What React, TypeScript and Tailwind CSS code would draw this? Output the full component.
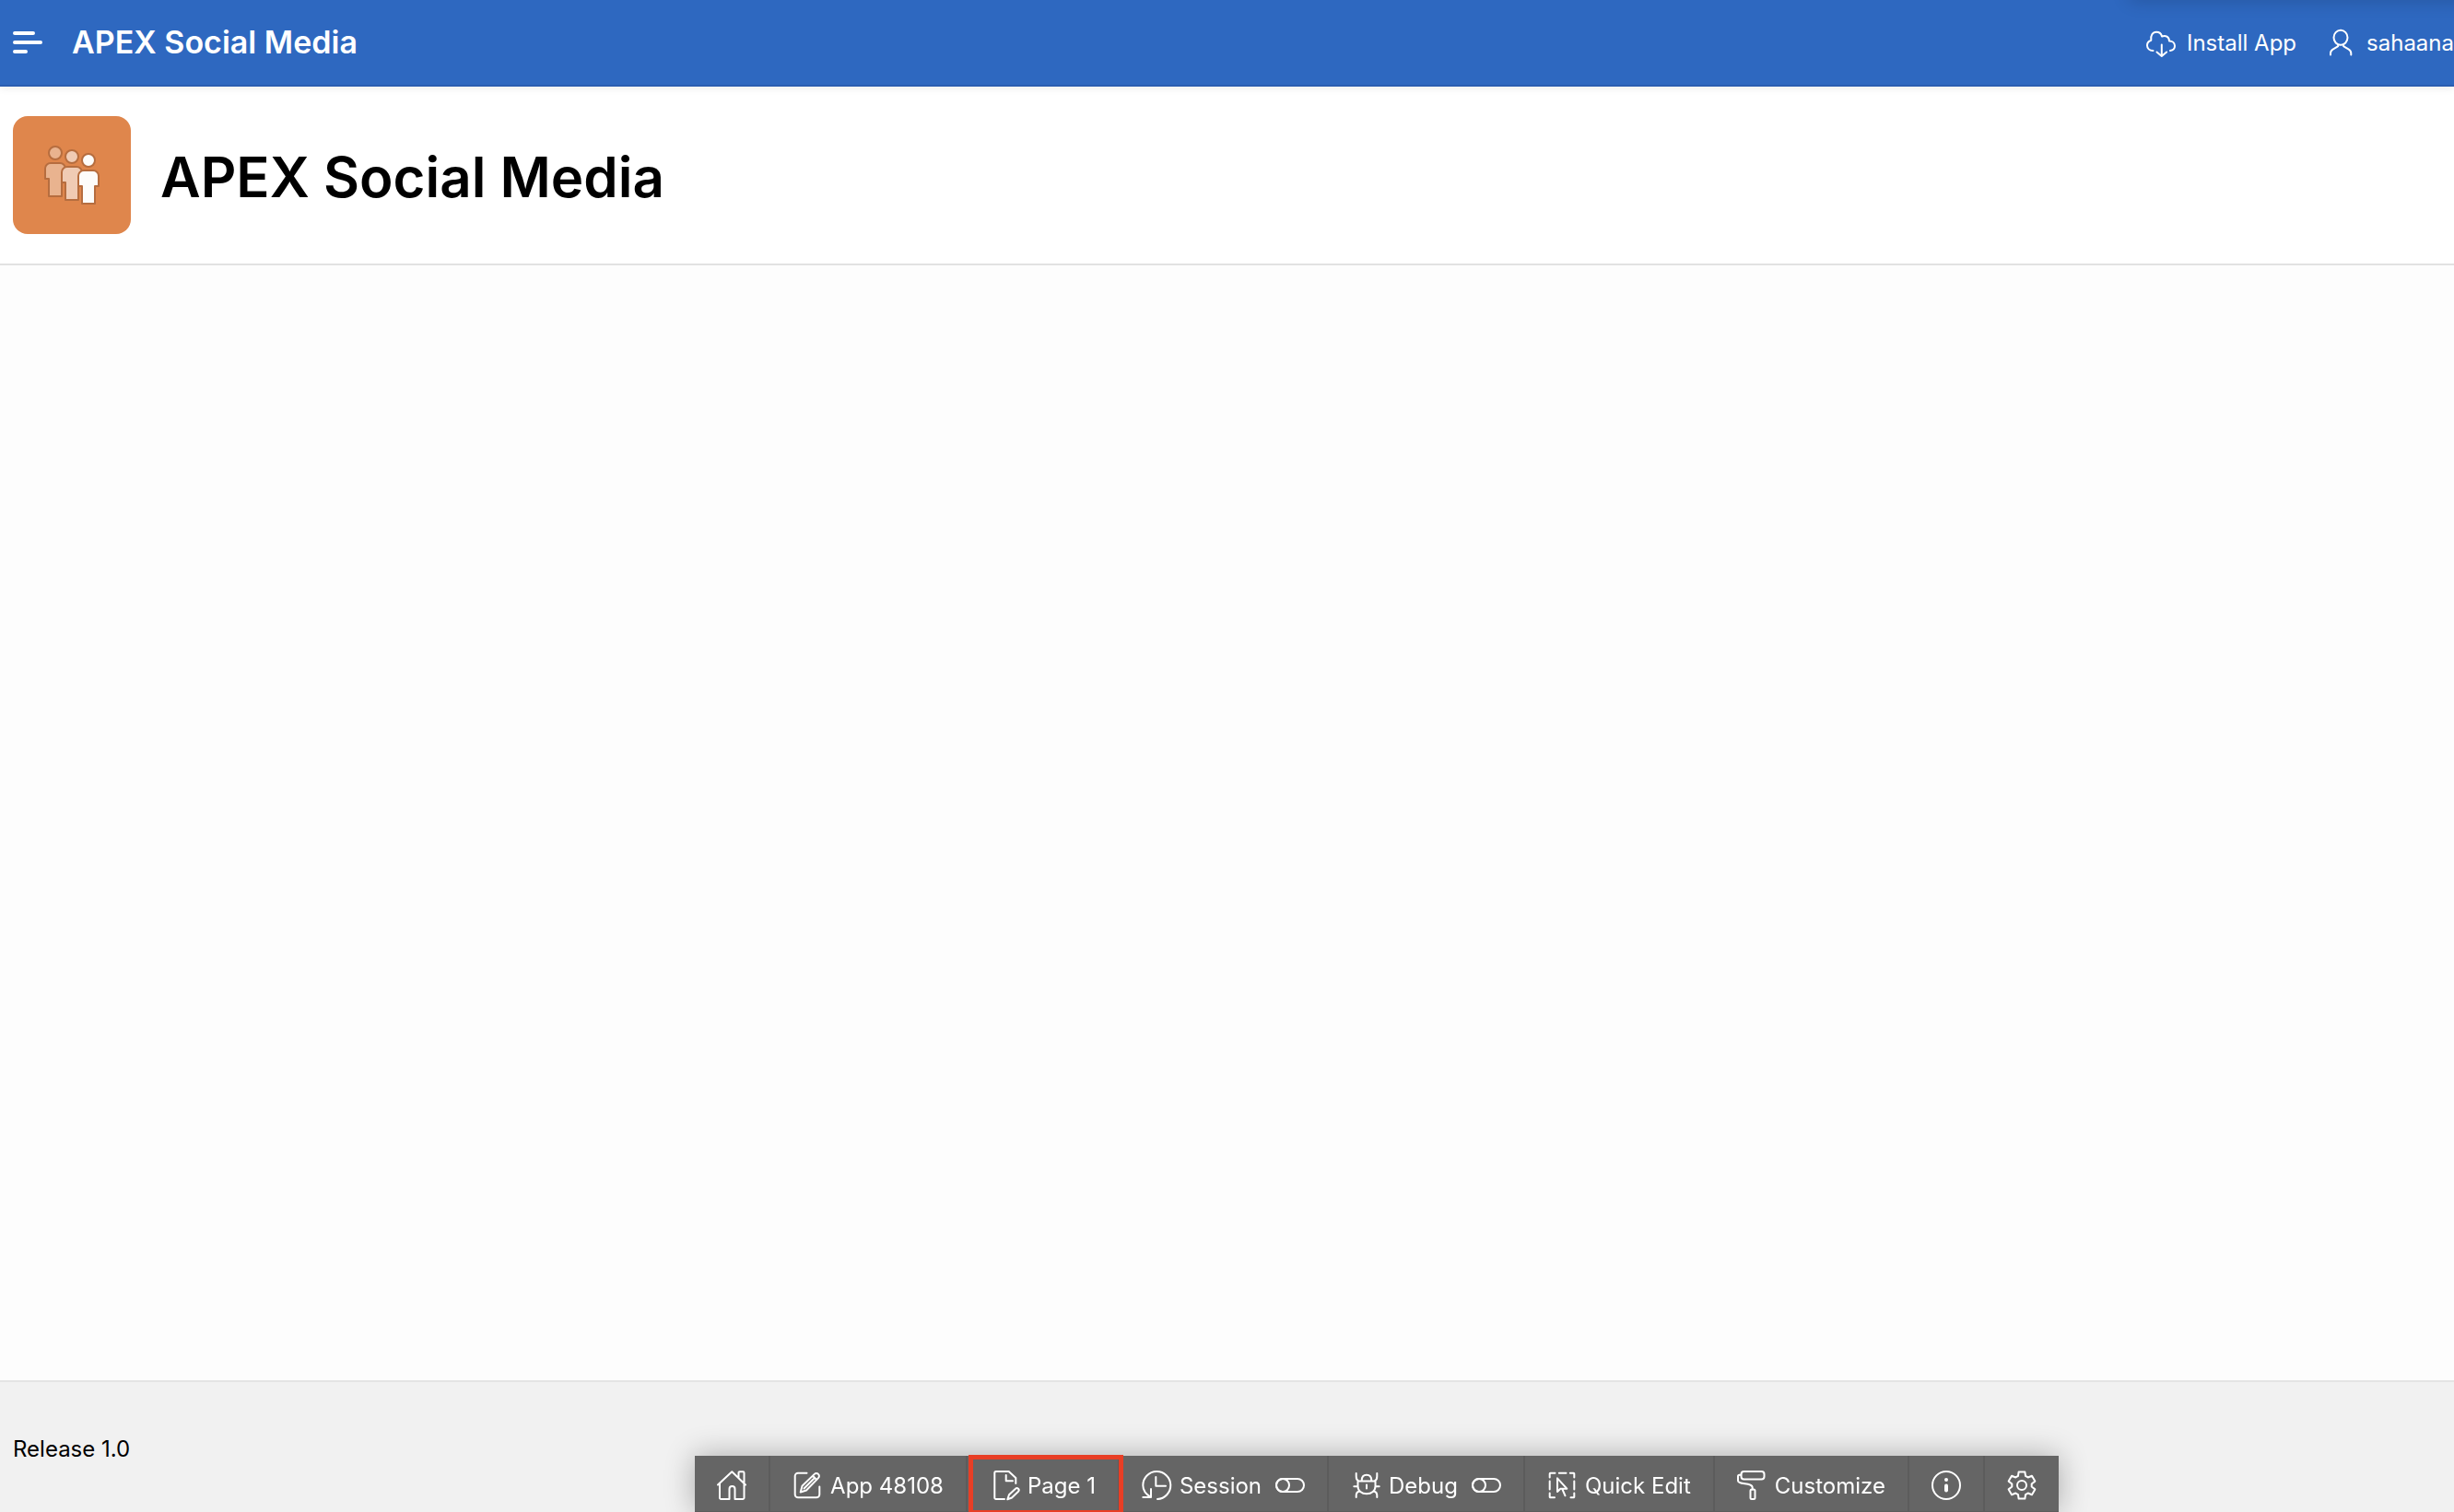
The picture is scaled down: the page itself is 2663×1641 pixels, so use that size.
import React from "react";

type IconProps = { children: React.ReactNode };

function Icon({ children }: IconProps) {
  return (
    <svg
      viewBox="0 0 32 32"
      className="size-8 shrink-0 overflow-visible"
      fill="none"
      stroke="currentColor"
      strokeWidth={2}
      strokeLinecap="round"
      strokeLinejoin="round"
      aria-hidden="true"
    >
      {children}
    </svg>
  );
}

const HomeIcon = () => (
  <Icon>
    <path d="M1 15.5 16.3 1.3 31 15.5M3 14v15.5a1.5 1.5 0 0 0 1.500 1.500H13.500V20a3 3 0 0 1 6 0v11h8.500a1.500 1.500 0 0 0 1.500-1.500V2.500a1.300 1.300 0 0 0-1.300-1.300h-3.400a1.300 1.300 0 0 0-1.300 1.300V8" />
  </Icon>
);

const EditIcon = () => (
  <Icon>
    <path d="M15.500 2.700H6a3.300 3.300 0 0 0-3.300 3.300v20a3.300 3.300 0 0 0 3.300 3.300h20a3.300 3.300 0 0 0 3.300-3.300v-8.500" />
    <path d="M8.700 23.500l1.800-6.700L23.800 3.900a2.900 2.900 0 0 1 4.200 0 2.900 2.900 0 0 1 0 4.200L15 21.500zM22 5.800l4.200 4.200M12.500 19.500 23 9" />
  </Icon>
);

const PageIcon = () => (
  <Icon>
    <path d="M16 31H6.800a1.500 1.500 0 0 1-1.500-1.500v-27A1.500 1.500 0 0 1 6.800 1H20.700l7.600 7v6M17.700 5v6.200H25" />
    <path d="M19.300 31.300l1.700-5 7-6.500a2.100 2.100 0 0 1 3 3l-7 6.700z" />
  </Icon>
);

const SessionIcon = () => (
  <Icon>
    <path d="M17 31A15 15 0 1 0 1.300 16c0 5.200 3 9.500 8.300 12.800M10 20v9H1.300M15.300 7v9.700H26" />
  </Icon>
);

const BugIcon = () => (
  <Icon>
    <path d="M7.500 11.600h19V17c0 5-4 8.300-9.500 8.300S7.500 22 7.500 17zM11.700 11c0-4 2-6.200 5.300-6.200s5.300 2.200 5.300 6.200M5.700 3v3.500c0 3 .8 4.300 2.800 5M28.300 3v3.500c0 3-.8 4.300-2.800 5M3.300 17.300h4.200M26.500 17.300h4.200M5.700 29v-2c0-2.500 1-4 3.500-4.500M28.300 29v-2c0-2.500-1-4-3.500-4.500M17 15.500v4" />
  </Icon>
);

const QuickEditIcon = () => (
  <Icon>
    <path d="M2.700 7.500V3.500a.8.8 0 0 1 .8-.8h5M12.800 2.700H20.500M24.800 2.700h3.700a.8.8 0 0 1 .8.8v4M29.300 11.500v9M29.300 24.500v4a.8.8 0 0 1-.8.8h-3M8 29.300H3.500a.8.8 0 0 1-.8-.8v-4M2.700 11.500v9" />
    <path d="M11 8.300v14.700l3.300-3.300h7zM16.300 20l3.200 7.300" />
  </Icon>
);

const RollerIcon = () => (
  <Icon>
    <rect x="4.500" y="1" width="25" height="8.500" rx="3" />
    <path d="M4.300 4.700H2.500A1.500 1.500 0 0 0 1 6.200V11c0 5 15.700 1.500 15.700 7.500v2" />
    <rect x="14.500" y="20.500" width="5" height="10.500" rx="1.500" />
  </Icon>
);

const InfoIcon = () => (
  <Icon>
    <circle cx="16" cy="16" r="15" />
    <circle cx="16" cy="10" r="2" fill="currentColor" stroke="none" />
    <path d="M16 16.500v5" strokeWidth={4} />
  </Icon>
);

const gearPath =
  [0, 60, 120, 180, 240, 300]
    .flatMap((turn) =>
      [
        [-13, 15],
        [13, 15],
        [22, 10.8],
        [38, 10.8],
      ].map(([offset, radius]) => {
        const angle = ((turn + offset - 90) * Math.PI) / 180;
        return `${(16 + radius * Math.cos(angle)).toFixed(2)} ${(16 + radius * Math.sin(angle)).toFixed(2)}`;
      }),
    )
    .reduce((path, point, i) => path + (i === 0 ? "M" : "L") + point, "") + "Z";

const GearIcon = () => (
  <Icon>
    <path d={gearPath} />
    <circle cx="16" cy="16" r="5" />
  </Icon>
);

const SwitchIcon = () => (
  <Icon>
    <rect x="1" y="9" width="30" height="14" rx="7" />
    <circle cx="8" cy="16" r="7" />
  </Icon>
);

const CloudDownloadIcon = () => (
  <Icon>
    <path d="M7.500 25C3.500 25 1 22.500 1 19.300c0-2.900 1.700-4.800 4.300-5.600C4.500 8.500 7 4.800 11 4.800c3 0 5.300 1.800 6 4.700 4-1.700 7.800.5 8 5 3.500 0 6 2.200 6 5.300 0 2.700-1.800 4.800-5 5.200M16.800 18.500V31M11.500 26.500l5.300 4.500 5.300-4.500" />
  </Icon>
);

const UserIcon = () => (
  <Icon>
    <ellipse cx="16" cy="10.800" rx="7.500" ry="8" />
    <path d="M5 29.500v-1.500c0-2.200.8-3.300 2.500-4.300l5-3c1-.6 1-1.200.7-2M27.300 29.500v-1.500c0-2.200-.8-3.300-2.500-4.300l-5-3c-1-.6-1-1.200-.7-2" />
  </Icon>
);

const MenuIcon = () => (
  <Icon>
    <path d="M2 6h20M2 16h28M2 26h12" strokeWidth={4} />
  </Icon>
);

const people = [
  { x: -36, y: -8, fill: "#e9b38f" },
  { x: -18, y: -4, fill: "#f0cbb4" },
  { x: 0, y: 0, fill: "#fdfcfa" },
];

function PeopleIcon() {
  return (
    <svg viewBox="0 0 64 64" className="size-16" stroke="#b66d3f" strokeWidth={2} strokeLinejoin="round" aria-hidden="true">
      {people.map((p) => (
        <g key={p.x} fill={p.fill} transform={`translate(${p.x} ${p.y})`}>
          <circle cx="50" cy="16" r="7" />
          <path d="M45 27h10a6 6 0 0 1 6 6v11h-4v19H43V44h-4V33a6 6 0 0 1 6-6z" />
        </g>
      ))}
    </svg>
  );
}

type ToolProps = {
  icon: React.ReactNode;
  label: string;
  hideLabel?: boolean;
  toggle?: boolean;
  highlighted?: boolean;
};

const tools: ToolProps[] = [
  { icon: <HomeIcon />, label: "Home", hideLabel: true },
  { icon: <EditIcon />, label: "App 48108" },
  { icon: <PageIcon />, label: "Page 1", highlighted: true },
  { icon: <SessionIcon />, label: "Session", toggle: true },
  { icon: <BugIcon />, label: "Debug", toggle: true },
  { icon: <QuickEditIcon />, label: "Quick Edit" },
  { icon: <RollerIcon />, label: "Customize" },
  { icon: <InfoIcon />, label: "Info", hideLabel: true },
  { icon: <GearIcon />, label: "Settings", hideLabel: true },
];

function Tool({ icon, label, hideLabel, toggle, highlighted }: ToolProps) {
  return (
    <li className="relative border-r-2 border-[#5c5c5c] last:border-r-0">
      <button type="button" aria-label={label} className="flex items-start gap-[9px] px-6 pt-4 pb-3">
        {icon}
        {!hideLabel && <span className="-mb-px pt-px">{label}</span>}
        {toggle && (
          <span className="pl-1.5">
            <SwitchIcon />
          </span>
        )}
      </button>
      {highlighted && (
        <span className="pointer-events-none absolute -top-px -right-1.5 -bottom-1 left-px z-10 border-5 border-[#e83e25]" />
      )}
    </li>
  );
}

export default function App() {
  return (
    <div className="flex min-h-screen flex-col overflow-x-hidden bg-[#fdfdfd] font-['Inter',sans-serif] text-2xl leading-8 text-black">
      <header className="relative flex h-[94px] items-center border-b-2 border-[#2a5db0] bg-[#2e68c0] pl-3.5 text-white shadow-[0_2px_8px_rgba(0,0,0,0.08)]">
        <span className="pointer-events-none absolute -right-8 bottom-full h-4 w-96 shadow-[0_0_20px_rgba(0,0,0,0.2)]" />
        <button type="button" aria-label="Main navigation">
          <MenuIcon />
        </button>
        <a href="#" className="ml-8 text-[34px] font-semibold whitespace-nowrap">
          APEX Social Media
        </a>
        <nav className="ml-auto flex gap-8">
          <a href="#" className="flex items-center gap-3 whitespace-nowrap">
            <CloudDownloadIcon />
            <span className="pt-0.5">Install App</span>
          </a>
          <button type="button" className="flex items-center gap-3">
            <UserIcon />
            <span className="pt-0.5">sahaana</span>
          </button>
        </nav>
      </header>

      <section className="flex items-center gap-8 border-b-2 border-[#e2e2e2] bg-white py-8 pl-3.5">
        <div className="flex size-32 items-center justify-center rounded-2xl bg-[#df864c]">
          <PeopleIcon />
        </div>
        <h1 className="pt-1 text-6xl leading-20 font-semibold">APEX Social Media</h1>
      </section>

      <main className="grow" />

      <footer className="border-t-2 border-[#e4e4e4] bg-[#f1f1f1] px-3.5 pt-[57px] pb-[52px]">Release 1.0</footer>

      <div className="pointer-events-none fixed inset-x-0 bottom-0 flex justify-center pl-[325px]">
        <ul className="pointer-events-auto flex border-b border-[#5c5c5c] bg-[#656565] whitespace-nowrap text-white shadow-[0_0_32px_rgba(0,0,0,0.3)]">
          {tools.map((tool) => (
            <Tool key={tool.label} {...tool} />
          ))}
        </ul>
      </div>
    </div>
  );
}
